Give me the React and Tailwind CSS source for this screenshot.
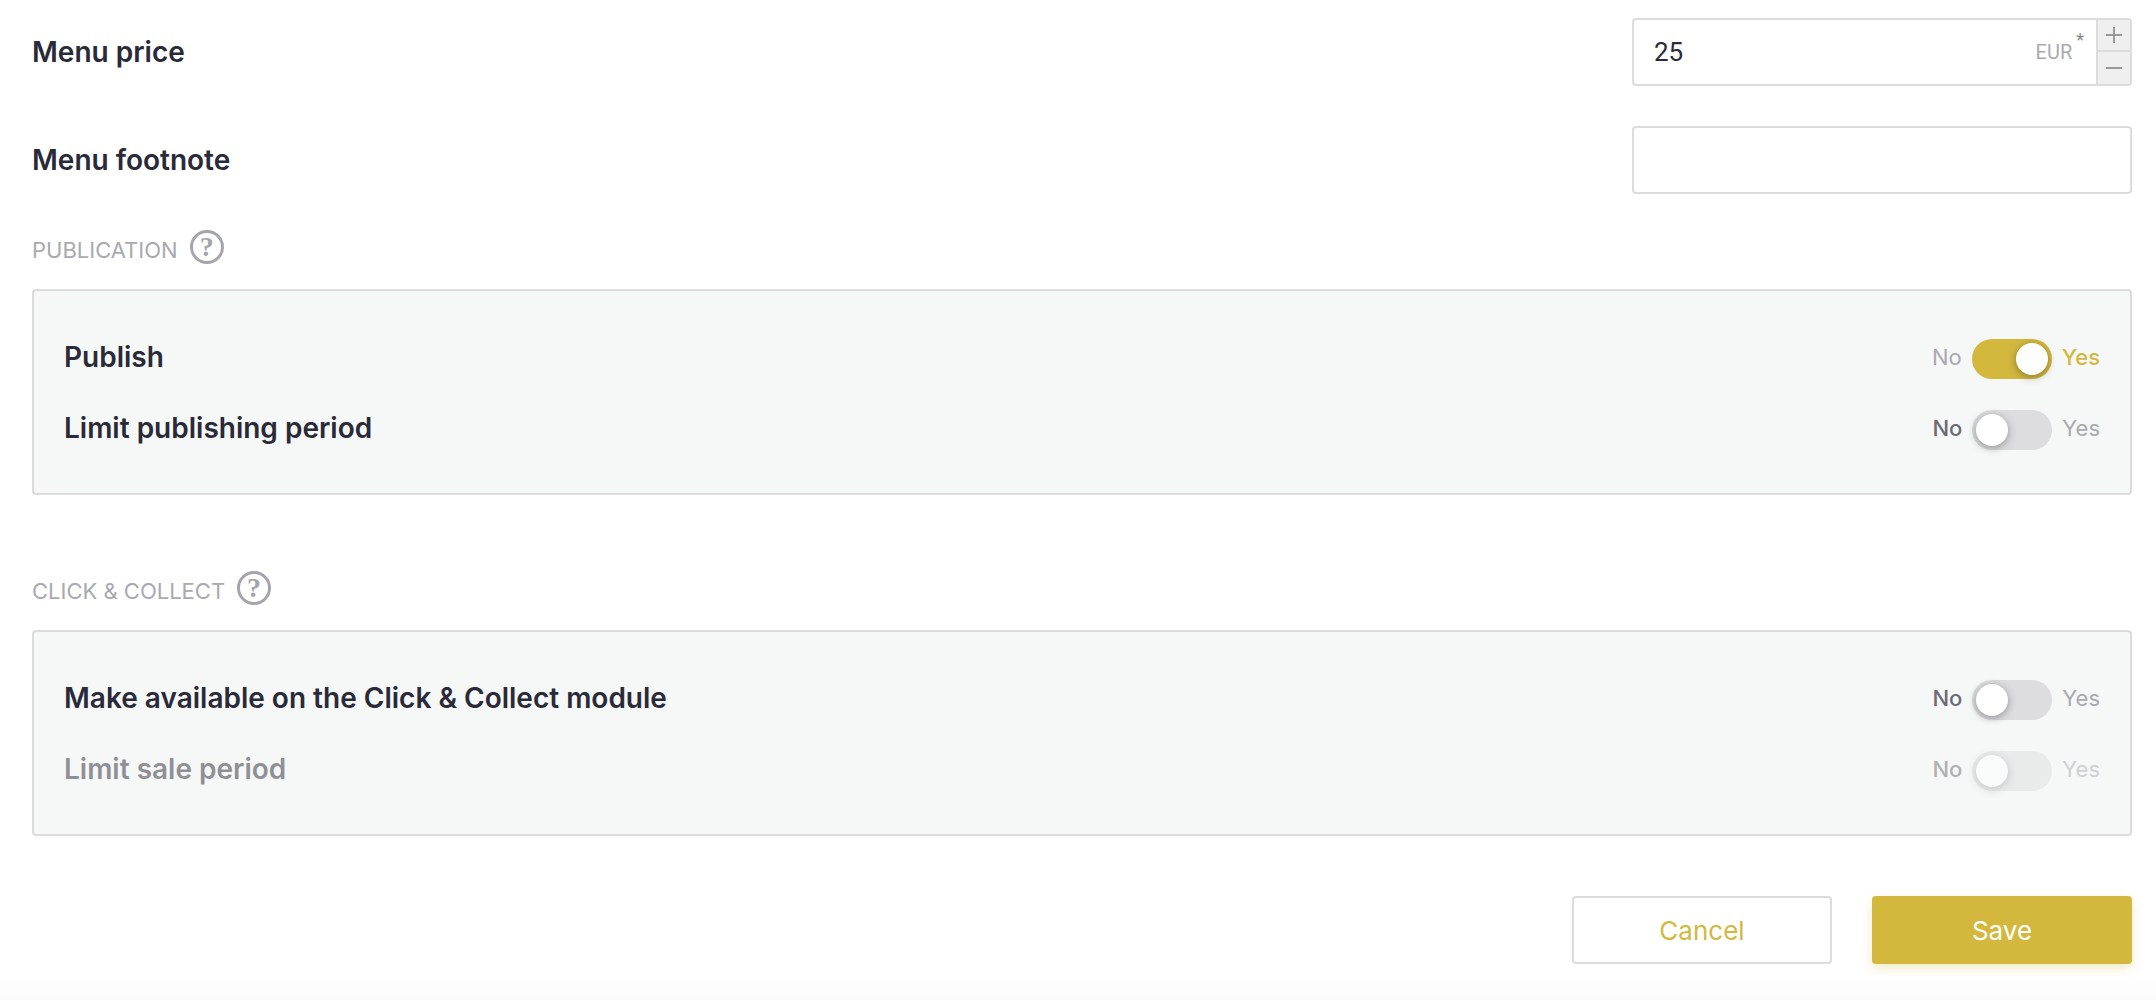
import React, { useState } from 'react';
import clsx from 'clsx';

const Field = ({ id, label, children }) => (
    <div className="flex items-center justify-between gap-8">
        <label htmlFor={id} className="text-[28px] leading-9 font-semibold">
            {label}
        </label>
        <div className="w-[500px] max-w-full">{children}</div>
    </div>
);

const NumberInput = ({ id, value, onChange, unit }) => (
    <div className="relative flex h-[68px] overflow-hidden rounded border-2 border-[#dcdcdc] bg-white">
        <input
            id={id}
            type="text"
            inputMode="numeric"
            value={value}
            onChange={(e) => onChange(Number(e.target.value) || 0)}
            className="min-w-0 flex-1 pl-5 font-[Roboto,sans-serif] text-[26px] outline-none"
        />
        <span className="self-center font-[Roboto,sans-serif] text-xl text-[#a9a9b1]">{unit}</span>
        <span className="mt-2 mr-3 ml-1 font-[Roboto,sans-serif] text-lg leading-6 text-[#888]">*</span>
        <div className="flex w-[34px] flex-col border-l-2 border-[#dcdcdc] bg-[#efefef] text-[#999]">
            <button
                type="button"
                aria-label="Increase"
                onClick={() => onChange(value + 1)}
                className="flex h-8 items-center justify-center border-b-2 border-[#dcdcdc]"
            >
                <svg width="16" height="16" viewBox="0 0 16 16" stroke="currentColor" strokeWidth="2">
                    <path d="M0 8h16M8 0v16" />
                </svg>
            </button>
            <button
                type="button"
                aria-label="Decrease"
                onClick={() => onChange(value - 1)}
                className="flex h-8 items-center justify-center"
            >
                <svg width="16" height="16" viewBox="0 0 16 16" stroke="currentColor" strokeWidth="2">
                    <path d="M0 8h16" />
                </svg>
            </button>
        </div>
    </div>
);

const ToggleRow = ({ id, label, checked, onChange, disabled }) => (
    <div className={clsx('flex items-center justify-between gap-8', disabled && 'opacity-50')}>
        <label htmlFor={id} className="text-[28px] leading-9 font-semibold">
            {label}
        </label>
        <div className="flex items-center gap-[10px] text-[22px] leading-8">
            <span className={checked ? 'text-[#a9a9b1]' : 'font-medium text-[#6b6b76]'}>No</span>
            <input
                id={id}
                type="checkbox"
                role="switch"
                checked={checked}
                disabled={disabled}
                onChange={(e) => onChange(e.target.checked)}
                className="mt-1 h-10 w-20 appearance-none rounded-full bg-[#dddddf] p-1 transition-colors before:block before:size-8 before:rounded-full before:bg-white before:shadow-[0_2px_8px_rgba(0,0,0,0.35)] before:transition-transform checked:bg-[#d4b83e] checked:before:translate-x-10"
            />
            <span className={checked ? 'font-medium text-[#d4b83e]' : 'text-[#a9a9b1]'}>Yes</span>
        </div>
    </div>
);

const Section = ({ title, className, children }) => (
    <section className={className}>
        <div className="flex items-center gap-3">
            <h2 className="mt-1.5 text-[22px] leading-6 text-[#a9a9b1] uppercase">{title}</h2>
            <button
                type="button"
                aria-label={`Help: ${title}`}
                className="flex size-[34px] items-center justify-center rounded-full border-[3px] border-[#a4a4ad] font-[Liberation_Serif,serif] text-[28px] leading-7 font-bold text-[#a4a4ad]"
            >
                ?
            </button>
        </div>
        <div className="mt-[25px] flex flex-col gap-[27px] rounded border-2 border-[#dcdcdc] bg-[#f6f8f7] px-[30px] pt-11 pb-[43px]">
            {children}
        </div>
    </section>
);

const App = () => {
    const [price, setPrice] = useState(25);
    const [footnote, setFootnote] = useState('');
    const [publish, setPublish] = useState(true);
    const [limitPublishing, setLimitPublishing] = useState(false);
    const [collect, setCollect] = useState(false);
    const [limitSale, setLimitSale] = useState(false);

    return (
        <form
            onSubmit={(e) => e.preventDefault()}
            className="flex min-h-screen flex-col bg-white font-[Inter,sans-serif] text-[#2a2a38]"
        >
            <div className="flex flex-col pt-[18px] pr-6 pl-8">
                <div className="flex flex-col gap-10">
                    <Field id="price" label="Menu price">
                        <NumberInput id="price" value={price} onChange={setPrice} unit="EUR" />
                    </Field>
                    <Field id="footnote" label="Menu footnote">
                        <input
                            id="footnote"
                            type="text"
                            value={footnote}
                            onChange={(e) => setFootnote(e.target.value)}
                            className="block h-[68px] w-full rounded border-2 border-[#dcdcdc] bg-white px-5 text-[26px] outline-none"
                        />
                    </Field>
                </div>

                <Section title="Publication" className="mt-9">
                    <ToggleRow id="publish" label="Publish" checked={publish} onChange={setPublish} />
                    <ToggleRow
                        id="limit-publishing"
                        label="Limit publishing period"
                        checked={limitPublishing}
                        onChange={setLimitPublishing}
                    />
                </Section>

                <Section title="Click &amp; Collect" className="mt-[76px]">
                    <ToggleRow
                        id="collect"
                        label="Make available on the Click &amp; Collect module"
                        checked={collect}
                        onChange={setCollect}
                    />
                    <ToggleRow
                        id="limit-sale"
                        label="Limit sale period"
                        checked={limitSale}
                        onChange={setLimitSale}
                        disabled={!collect}
                    />
                </Section>

                <div className="mt-[60px] flex justify-end gap-10 text-[26px]">
                    <button
                        type="button"
                        className="h-[68px] w-[260px] rounded border-2 border-[#dcdcdc] bg-white text-[#d4b83e]"
                    >
                        Cancel
                    </button>
                    <button
                        type="submit"
                        className="h-[68px] w-[260px] rounded bg-[#d4b83e] text-white shadow-[0_4px_12px_rgba(212,184,62,0.3)]"
                    >
                        Save
                    </button>
                </div>
            </div>
            <div className="mt-auto h-6 bg-linear-to-b from-white to-[#fafafa]" />
        </form>
    );
};

export default App;
